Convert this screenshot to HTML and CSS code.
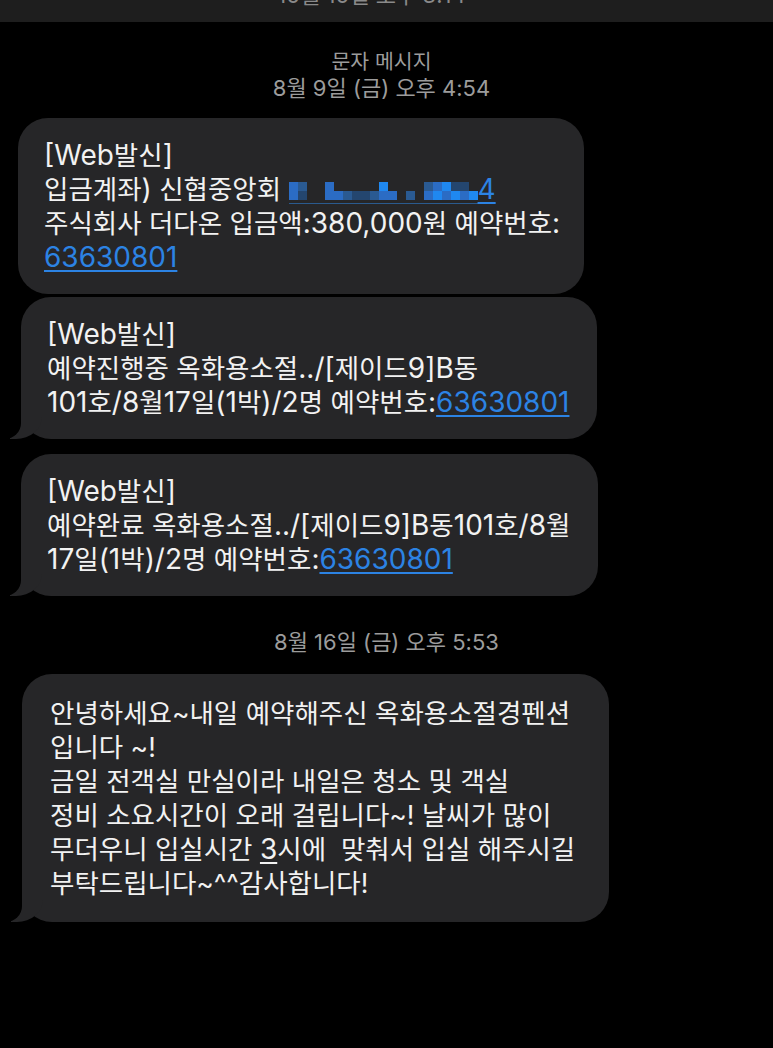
FILE: index.html
```html
<!DOCTYPE html>
<html lang="ko">
<head>
<meta charset="utf-8">
<title>문자 메시지</title>
<link rel="stylesheet" href="styles.css">
</head>
<body>
<div class="page">
  <div class="topbar"><span class="topbar-text">10월 10일 오후 3:14</span></div>

  <div class="thread-head">
    <div class="kind">문자 메시지</div>
    <div class="date">8월 9일 (금) 오후 4:54</div>
  </div>

  <div class="list">
    <div class="bubble b1">
      <span class="la">[Web</span>발신<span class="la">]</span><br>
      입금계좌<span class="la">)</span> 신협중앙회 <span class="mask"><span class="mask-grid"><span class="px a"></span><span class="px a"></span><span class="px d"></span><span class="px b"></span><span class="px o"></span><span class="px o"></span><span class="px o"></span><span class="px o"></span><span class="px a"></span><span class="px a"></span><span class="px o"></span><span class="px a"></span><span class="px o"></span><span class="px d"></span><span class="px o"></span><span class="px b"></span><span class="px o"></span><span class="px b"></span><span class="px o"></span><span class="px d"></span><span class="px c"></span><span class="px a"></span><span class="px o"></span><span class="px a"></span><span class="px o"></span><span class="px o"></span><span class="px o"></span><span class="px d"></span><span class="px o"></span><span class="px o"></span><span class="px d"></span><span class="px a"></span><span class="px a"></span><span class="px c"></span><span class="px c"></span><span class="px a"></span><span class="px b"></span><span class="px c"></span><span class="px b"></span><span class="px a"></span><span class="px o"></span><span class="px c"></span></span></span><a class="link la">4</a><br>
      주식회사 더다온 입금액<span class="la">:380,000</span>원 예약번호<span class="la">:</span><br>
      <a class="link la">63630801</a>
    </div>

    <div class="bubble b2 tail">
      <span class="la">[Web</span>발신<span class="la">]</span><br>
      예약진행중 옥화용소절<span class="la">../[</span>제이드<span class="la">9]B</span>동<br>
      <span class="la">101</span>호<span class="la">/8</span>월<span class="la">17</span>일<span class="la">(1</span>박<span class="la">)/2</span>명 예약번호<span class="la">:</span><a class="link la">63630801</a>
    </div>

    <div class="bubble b3 tail">
      <span class="la">[Web</span>발신<span class="la">]</span><br>
      예약완료 옥화용소절<span class="la">../[</span>제이드<span class="la">9]B</span>동<span class="la">101</span>호<span class="la">/8</span>월<br>
      <span class="la">17</span>일<span class="la">(1</span>박<span class="la">)/2</span>명 예약번호<span class="la">:</span><a class="link la">63630801</a>
    </div>
  </div>

  <div class="stamp">8월 16일 (금) 오후 5:53</div>

  <div class="list">
    <div class="bubble b4 tail">
      안녕하세요~내일 예약해주신 옥화용소절경펜션<br>
      입니다 ~!<br>
      금일 전객실 만실이라 내일은 청소 및 객실<br>
      정비 소요시간이 오래 걸립니다~! 날씨가 많이<br>
      무더우니 입실시간 <span class="u la">3</span>시에 &nbsp;맞춰서 입실 해주시길<br>
      부탁드립니다~^^감사합니다!
    </div>
  </div>
</div>
</body>
</html>
```

FILE: styles.css
```css
* {
  box-sizing: border-box;
}

body {
  margin: 0;
  background: #000;
  color: #f2f2f2;
  font-family: Inter, "Noto Sans CJK KR", sans-serif;
}

.page {
  width: 773px;
  height: 1048px;
  overflow: hidden;
  background: #000;
}

.topbar {
  height: 22px;
  background: #1e1e1e;
  overflow: hidden;
  display: flex;
  justify-content: center;
}

.topbar-text {
  margin-top: -18px;
  margin-right: 30px;
  font-size: 22px;
  line-height: 26px;
  color: #8a8a8a;
}

.thread-head {
  margin-top: 27px;
  text-align: center;
  color: #9c9c9c;
  line-height: 26px;
}

.thread-head .kind {
  font-size: 20.5px;
  margin-right: 10px;
}

.thread-head .date {
  font-size: 22px;
  margin-right: 10px;
}

.stamp {
  margin-top: 33px;
  text-align: center;
  color: #9c9c9c;
  font-size: 22px;
  line-height: 26px;
}

.list {
  display: flex;
  flex-direction: column;
  align-items: flex-start;
  padding-left: 18px;
}

.bubble {
  position: relative;
  background: #262628;
  border-radius: 30px;
  padding: 20px 24px 20px 26px;
  font-size: 26.5px;
  line-height: 34px;
  white-space: nowrap;
  color: #f2f2f2;
}

.b1 {
  margin-top: 17px;
}

.b2 {
  margin-top: 3px;
  margin-left: 3px;
  padding-right: 28px;
}

.b3 {
  margin-top: 15px;
  margin-left: 3px;
  padding-right: 28px;
}

.b4 {
  margin-top: 19px;
  margin-left: 4px;
  padding: 22px 34px 22px 28px;
}

.tail::before {
  content: "";
  position: absolute;
  bottom: 0;
  left: -11px;
  width: 32px;
  height: 32px;
  background: #262628;
  border-bottom-right-radius: 26px 22px;
}

.tail::after {
  content: "";
  position: absolute;
  bottom: 0;
  left: -40px;
  width: 40px;
  height: 34px;
  background: #000;
  border-bottom-right-radius: 16px;
}

.la {
  font-size: 28px;
}

.link {
  color: #2c83e4;
  text-decoration: underline;
  text-decoration-thickness: 1.5px;
  text-underline-offset: 3px;
}

.u {
  text-decoration: underline;
  text-decoration-thickness: 1.5px;
  text-underline-offset: 3px;
}

.mask {
  display: inline-block;
  overflow: hidden;
  vertical-align: -5px;
  line-height: 0;
}

.mask-grid {
  display: grid;
  grid-template-rows: 9px 9px;
  grid-auto-columns: 9px;
  grid-auto-flow: column;
  padding-bottom: 3px;
  border-bottom: 1.5px solid #2a5a8e;
}

.px {
  display: block;
}

.px.a {
  background: #2b6cc4;
}

.px.b {
  background: #24466f;
}

.px.c {
  background: #1f88f0;
}

.px.d {
  background: #2a5a92;
}

.px.o {
  background: transparent;
}
```
